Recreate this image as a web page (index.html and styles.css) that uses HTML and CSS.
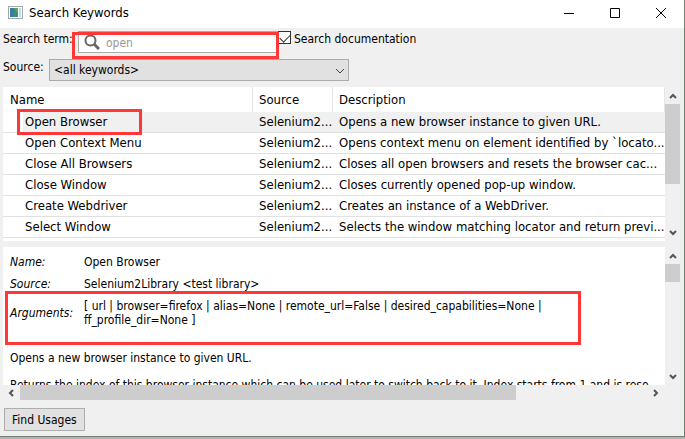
FILE: index.html
```html
<!DOCTYPE html>
<html lang="en">
<head>
<meta charset="utf-8">
<title>Search Keywords</title>
<link rel="stylesheet" href="styles.css">
</head>
<body>
<div class="desktop">
<div class="window">
  <header class="titlebar">
    <svg class="app-icon" width="15" height="13" viewBox="0 0 15 13"><rect x=".5" y=".5" width="14" height="12" fill="#fff" stroke="#a6a6a6"/><rect x="2" y="2" width="8" height="9" fill="#3f8f78"/><rect x="2" y="2" width="4" height="9" fill="#377caf"/><path d="M6 2h4v5z" fill="#62a653"/><rect x="11" y="2" width="2" height="9" fill="#b7ddea"/></svg>
    <h1 class="title">Search Keywords</h1>
    <button class="caption" aria-label="Minimize"><svg width="12" height="12" viewBox="0 0 12 12"><path d="M1 6.5h10"/></svg></button>
    <button class="caption" aria-label="Maximize"><svg width="12" height="12" viewBox="0 0 12 12"><path d="M1.500 1.500h9v9h-9z"/></svg></button>
    <button class="caption" aria-label="Close"><svg width="12" height="12" viewBox="0 0 12 12"><path d="M1 1l10 10M11 1L1 11"/></svg></button>
  </header>
  <main class="body">
    <form class="filters">
      <div class="row">
        <label class="term-label" for="term">Search term:</label>
        <div class="search marked">
          <svg class="lens" width="16" height="16" viewBox="0 0 16 16"><circle cx="6.500" cy="6.500" r="5"/><path d="M10 10l5 5"/></svg>
          <input class="search-input" id="term" type="text" placeholder="open">
        </div>
        <input class="check" id="docs" type="checkbox" checked>
        <label for="docs">Search documentation</label>
      </div>
      <div class="row source-row">
        <label class="source-label" for="source">Source:</label>
        <div class="combo">
          <select class="select" id="source"><option>&lt;all keywords&gt;</option></select>
          <svg class="combo-arrow" width="10" height="6" viewBox="0 0 10 6"><path d="M1 1l4 4 4-4"/></svg>
        </div>
      </div>
    </form>
    <section class="pane results">
      <div class="view">
        <table class="keywords">
          <colgroup><col class="c-name"><col class="c-source"><col></colgroup>
          <thead><tr><th>Name</th><th>Source</th><th>Description</th></tr></thead>
          <tbody>
            <tr class="selected"><td class="marked">Open Browser</td><td>Selenium2...</td><td>Opens a new browser instance to given URL.</td></tr>
            <tr><td>Open Context Menu</td><td>Selenium2...</td><td>Opens context menu on element identified by `locato...</td></tr>
            <tr><td>Close All Browsers</td><td>Selenium2...</td><td>Closes all open browsers and resets the browser cac...</td></tr>
            <tr><td>Close Window</td><td>Selenium2...</td><td>Closes currently opened pop-up window.</td></tr>
            <tr><td>Create Webdriver</td><td>Selenium2...</td><td>Creates an instance of a WebDriver.</td></tr>
            <tr><td>Select Window</td><td>Selenium2...</td><td>Selects the window matching locator and return previ...</td></tr>
          </tbody>
        </table>
      </div>
      <div class="vbar">
        <svg class="arrow" viewBox="0 0 8 6"><path d="M1 5l3-3 3 3"/></svg>
        <div class="track"><div class="thumb thumb-results"></div></div>
        <svg class="arrow" viewBox="0 0 8 6"><path d="M1 1l3 3 3-3"/></svg>
      </div>
    </section>
    <section class="pane details">
      <div class="view doc">
        <dl class="facts">
          <dt>Name:</dt><dd>Open Browser</dd>
          <dt>Source:</dt><dd>Selenium2Library &lt;test library&gt;</dd>
          <div class="arguments marked"><dt>Arguments:</dt><dd>[ url | browser=firefox | alias=None | remote_url=False | desired_capabilities=None |<br>ff_profile_dir=None ]</dd></div>
        </dl>
        <p>Opens a new browser instance to given URL.</p>
        <p>Returns the index of this browser instance which can be used later to switch back to it. Index starts from 1 and is rese</p>
      </div>
      <div class="vbar">
        <svg class="arrow" viewBox="0 0 8 6"><path d="M1 5l3-3 3 3"/></svg>
        <div class="track"><div class="thumb thumb-doc"></div></div>
        <svg class="arrow" viewBox="0 0 8 6"><path d="M1 1l3 3 3-3"/></svg>
      </div>
    </section>
    <div class="hbar">
      <svg class="harrow" viewBox="0 0 6 8"><path d="M5 1L2 4l3 3"/></svg>
      <div class="htrack"><div class="hthumb"></div></div>
      <svg class="harrow" viewBox="0 0 6 8"><path d="M1 1l3 3-3 3"/></svg>
    </div>
    <footer class="actions"><button class="push">Find Usages</button></footer>
  </main>
</div>
</div>
</body>
</html>
```
FILE: styles.css
```css
* { box-sizing: border-box; }
body { margin: 0; font: 13px/16px "DejaVu Sans Condensed", "DejaVu Sans", sans-serif; color: #000; }
.desktop { height: 100vh; padding-bottom: 2px; background: #b4b4b4; }
.window {
  display: flex; flex-direction: column; height: 100%;
  background: #f0f0f0; border: solid #6f8070; border-width: 0 1px 1px 0;
  overflow: hidden;
}
.titlebar { display: flex; align-items: center; height: 28px; flex: none; padding: 0 0 3px 8px; background: #fff; }
.title { flex: 1; margin: 0 0 0 6px; font-size: 13px; font-weight: 400; }
.caption { display: flex; align-items: center; justify-content: center; width: 46px; height: 24px; padding: 0; border: 0; background: none; }
.caption svg { fill: none; stroke: #000; }

.body { display: flex; flex-direction: column; flex: 1; min-height: 0; padding: 3px 4px 5px 3px; }
.filters, .facts, .push { font: 12px/14px "DejaVu Sans Condensed", "DejaVu Sans", sans-serif; }
.row { display: flex; align-items: flex-start; }
.row label { line-height: 16px; }
.term-label { width: 75px; white-space: nowrap; }
.search { position: relative; display: flex; align-items: center; width: 200px; height: 22px; padding-left: 5px; background: #fff; border: 1px solid #ababab; }
.lens { fill: none; stroke: #666; stroke-width: 2; flex: none; }
.lens path { stroke-width: 3; }
.search-input { flex: 1; min-width: 0; padding: 2px 0 0 6px; border: 0; outline: 0; background: none; font: inherit; }
.search-input::placeholder { color: #999; opacity: 1; }
.check {
  appearance: none; flex: none; width: 13px; height: 13px; margin: 0 3px 0 0;
  border: 1px solid #333; background: #fff; display: grid; place-items: center;
}
.check::after { content: ""; width: 9px; height: 5px; border: solid #333; border-width: 0 0 1px 1px; transform: translateY(-1px) rotate(-45deg); }
.source-row { margin: 6px 0; }
.source-label { width: 46px; }
.combo { position: relative; width: 300px; }
.select { appearance: none; display: block; width: 100%; height: 22px; padding: 0 4px; border: 1px solid #ababab; border-radius: 0; background: #e1e1e1; color: #000; font: 12px/16px "DejaVu Sans Condensed", "DejaVu Sans", sans-serif; }
.combo-arrow { position: absolute; right: 4px; top: 9px; fill: none; stroke: #444; }

.marked { position: relative; }
.marked::after { content: ""; position: absolute; z-index: 1; border: 3px solid #ff3737; pointer-events: none; }
.search.marked::after { inset: 0 -2px -7px -7px; }
td.marked::after { inset: -3px 111px -3px 14px; }
.arguments.marked::after { inset: -8px 84px -18px -5px; }

.pane { display: flex; min-height: 0; }
.view { flex: 1; min-width: 0; overflow: hidden; background: #fff; }
.results { flex: none; height: 154px; }
.keywords { width: 100%; table-layout: fixed; border-collapse: separate; border-spacing: 0; }
.c-name { width: 250px; }
.c-source { width: 80px; }
th { height: 25px; padding: 0 6px; border-right: 1px solid #e5e5e5; font-weight: 400; text-align: left; }
th:first-child { padding-left: 7px; }
td { height: 21px; padding: 0 0 0 6px; border-bottom: 1px solid #e1e1e1; white-space: nowrap; }
td:first-child { padding-left: 22px; }
.selected td { background: #f0f0f0; }
.selected td:first-child { background: linear-gradient(90deg, #fff 20px, #f0f0f0 20px); }

.vbar { display: flex; flex-direction: column; flex: none; width: 15px; }
.arrow { width: 8px; height: 6px; margin: 6px auto 5px; fill: none; stroke: #555; stroke-width: 2; flex: none; }
.track { flex: 1; }
.thumb, .hthumb { background: #cdcdcd; }
.thumb-results { width: 15px; height: 80px; }
.thumb-doc { width: 15px; height: 18px; }
.details { flex: 1; margin-top: 6px; }
.doc { padding: 8px 0 0 7px; font: 12px/14px "DejaVu Sans Condensed", "DejaVu Sans", sans-serif; white-space: nowrap; }
.facts { display: grid; grid-template-columns: 74px 1fr; row-gap: 8px; margin: 0; }
.facts dt { font-style: italic; }
.facts dd { margin: 0; }
.arguments { grid-column: 1 / -1; display: grid; grid-template-columns: subgrid; align-items: center; }
.doc p { margin: 0 0 13px; }
.facts + p { margin-top: 24px; }
.hbar { display: flex; flex: none; align-items: center; height: 15px; padding-right: 15px; }
.harrow { width: 6px; height: 8px; margin: 0 6px 0 5px; flex: none; fill: none; stroke: #555; stroke-width: 2; }
.htrack { flex: 1; }
.hthumb { width: 79%; height: 15px; }
.actions { display: flex; padding: 8px 1px 0; }
.push { height: 23px; padding: 0 7px; border: 1px solid #adadad; background: #e1e1e1; color: #000; }
```
